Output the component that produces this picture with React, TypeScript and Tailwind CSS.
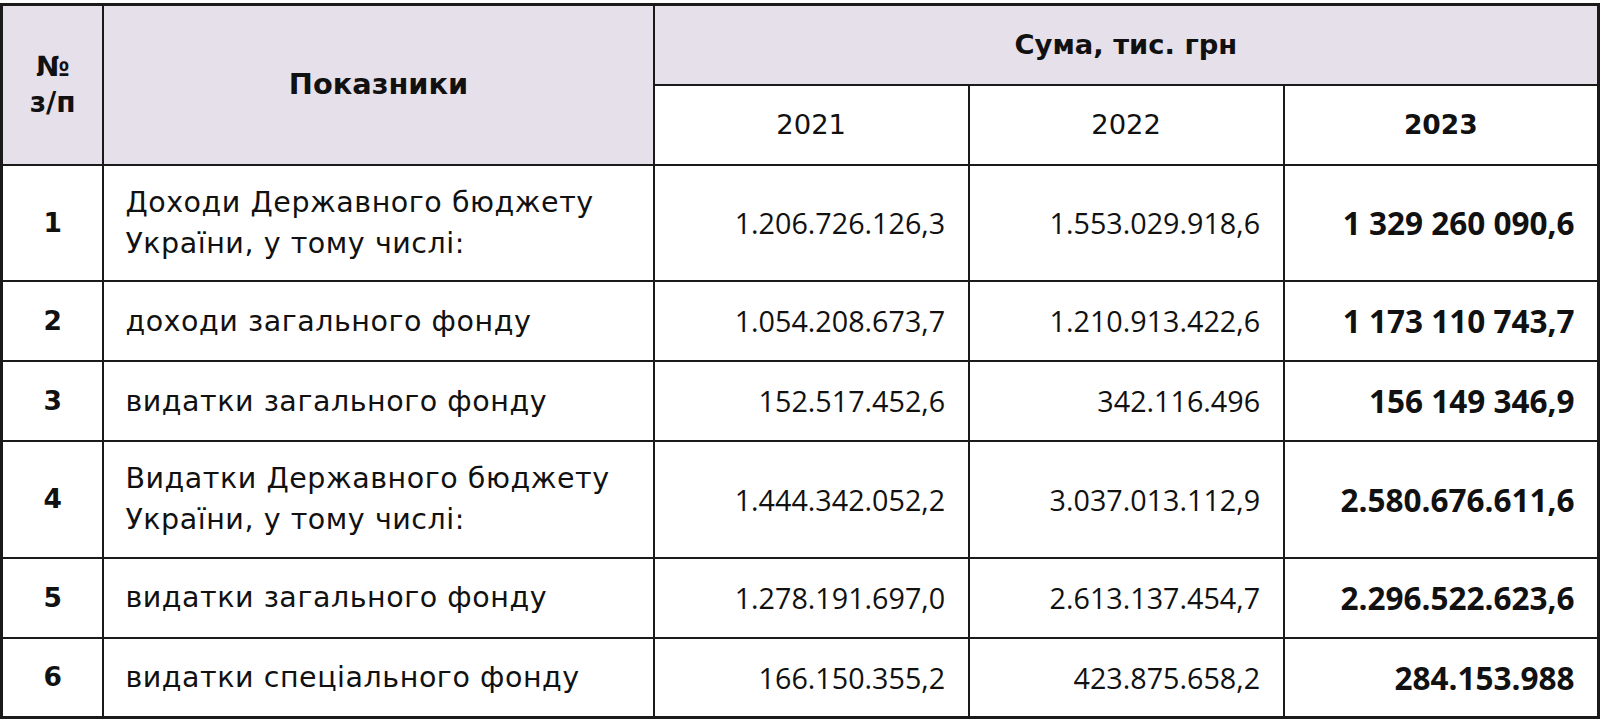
import React from "react";

type Row = { n: number; label: string[]; y2021: string; y2022: string; y2023: string; tall?: boolean };

const rows: Row[] = [
  { n: 1, label: ["Доходи Державного бюджету", "України, у тому числі:"], y2021: "1.206.726.126,3", y2022: "1.553.029.918,6", y2023: "1 329 260 090,6", tall: true },
  { n: 2, label: ["доходи загального фонду"], y2021: "1.054.208.673,7", y2022: "1.210.913.422,6", y2023: "1 173 110 743,7" },
  { n: 3, label: ["видатки загального фонду"], y2021: "152.517.452,6", y2022: "342.116.496", y2023: "156 149 346,9" },
  { n: 4, label: ["Видатки Державного бюджету", "України, у тому числі:"], y2021: "1.444.342.052,2", y2022: "3.037.013.112,9", y2023: "2.580.676.611,6", tall: true },
  { n: 5, label: ["видатки загального фонду"], y2021: "1.278.191.697,0", y2022: "2.613.137.454,7", y2023: "2.296.522.623,6" },
  { n: 6, label: ["видатки спеціального фонду"], y2021: "166.150.355,2", y2022: "423.875.658,2", y2023: "284.153.988" },
];

const cell = "border-2 border-[#1a1a1a] p-0";
const dv = "font-['DejaVu_Sans',sans-serif]";
const os = "font-['Open_Sans','Noto_Sans',sans-serif]";

export default function App() {
  return (
    <div className="bg-white pt-[3px] text-[#111]">
      <table className="w-full border-collapse border-[3px] border-[#1a1a1a] table-fixed">
        <colgroup>
          <col className="w-[6.38%]" />
          <col className="w-[34.46%]" />
          <col className="w-[19.72%]" />
          <col className="w-[19.72%]" />
          <col className="w-[19.72%]" />
        </colgroup>
        <thead>
          <tr className="h-[80px]">
            <th rowSpan={2} className={`${cell} ${dv} bg-[#e6e0ea] font-bold text-center text-[28px] leading-[36px]`}>
              №<br />з/п
            </th>
            <th rowSpan={2} className={`${cell} ${dv} bg-[#e6e0ea] font-bold text-center text-[28.8px]`}>
              Показники
            </th>
            <th colSpan={3} className={`${cell} ${dv} bg-[#e6e0ea] font-bold text-center text-[27.4px]`}>
              Сума, тис. грн
            </th>
          </tr>
          <tr className="h-[80px]">
            <th className={`${cell} ${dv} font-normal text-center text-[27.4px]`}>2021</th>
            <th className={`${cell} ${dv} font-normal text-center text-[27.4px]`}>2022</th>
            <th className={`${cell} ${dv} font-bold text-center text-[26.5px]`}>2023</th>
          </tr>
        </thead>
        <tbody>
          {rows.map((r) => (
            <tr key={r.n} className={r.tall ? "h-[116.5px]" : "h-[80px]"}>
              <td className={`${cell} ${dv} text-center font-bold text-[26.5px]`}>{r.n}</td>
              <td className={`${cell} ${dv} px-[21px] text-[28.5px] tracking-[0.55px] leading-[41px]`}>
                {r.label.map((l, i) => (
                  <div key={i}>{l}</div>
                ))}
              </td>
              <td className={`${cell} ${os} text-right px-[22.5px] text-[28.7px]`}>{r.y2021}</td>
              <td className={`${cell} ${os} text-right px-[22.5px] text-[28.7px]`}>{r.y2022}</td>
              <td className={`${cell} ${os} text-right px-[22.5px] text-[31.5px] font-bold`}>{r.y2023}</td>
            </tr>
          ))}
        </tbody>
      </table>
    </div>
  );
}
